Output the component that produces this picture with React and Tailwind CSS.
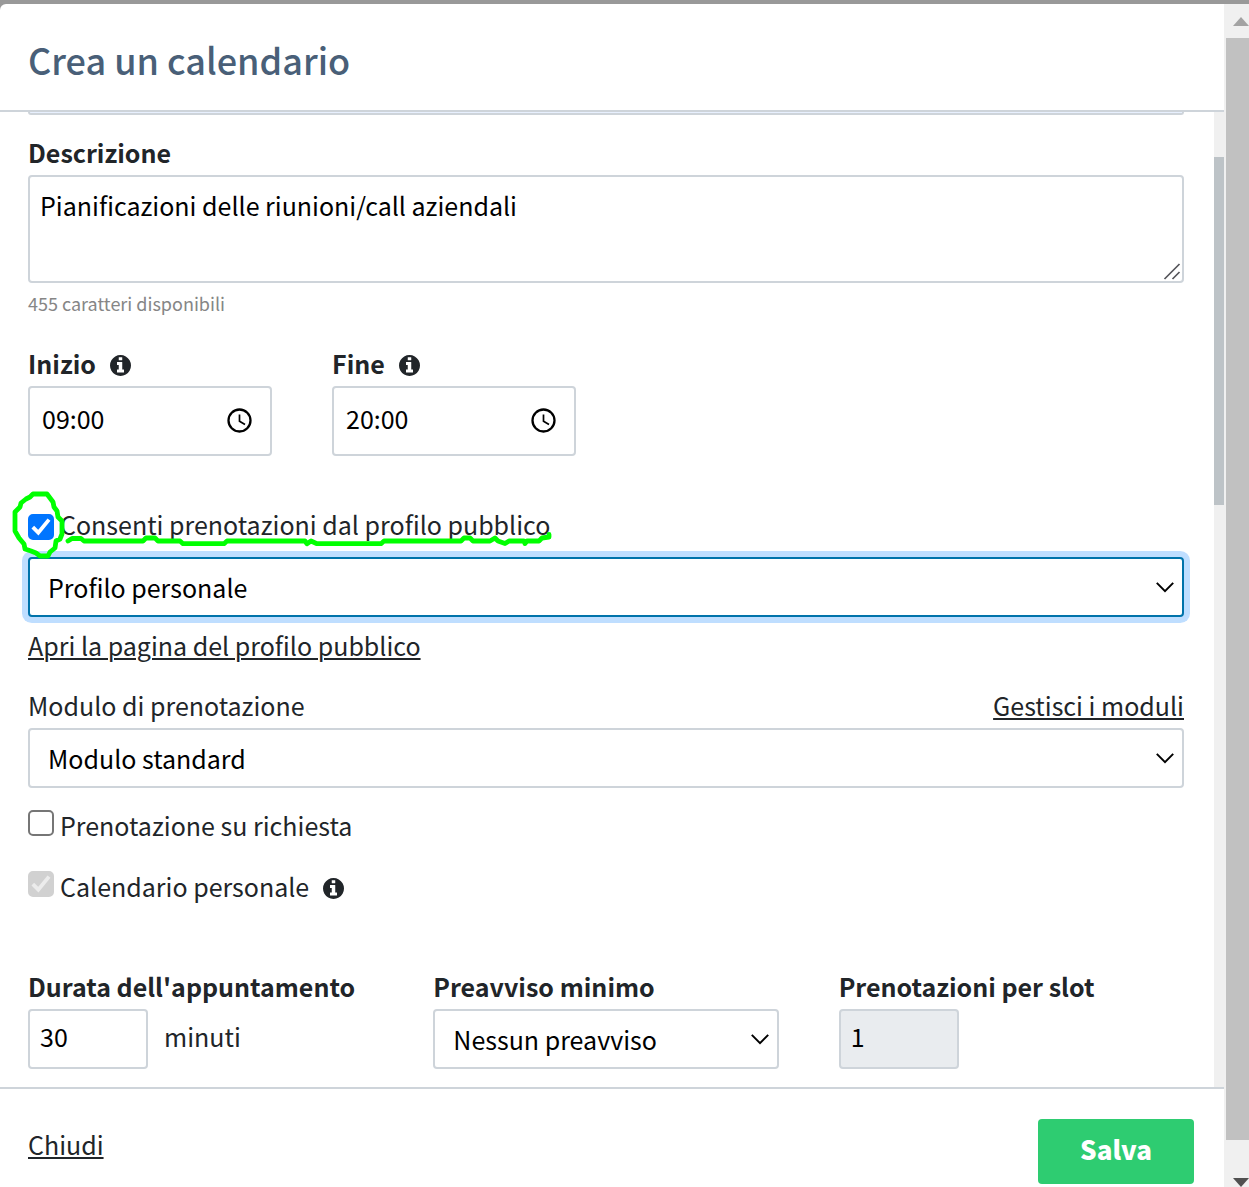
import React from 'react';

const fieldClass = 'block w-full rounded-[4px] border-2 border-[#ced4da] bg-white text-[25px] leading-[36px] text-black outline-none';

const InfoIcon = () => (
  <svg width="21" height="21" viewBox="0 0 1536 1536" fill="currentColor">
    <path d="M1024 1248v-160q0-14-9-23t-23-9h-96v-512q0-14-9-23t-23-9h-320q-14 0-23 9t-9 23v160q0 14 9 23t23 9h96v320h-96q-14 0-23 9t-9 23v160q0 14 9 23t23 9h448q14 0 23-9t9-23zM896 352v-160q0-14-9-23t-23-9h-192q-14 0-23 9t-9 23v160q0 14 9 23t23 9h192q14 0 23-9t9-23zM1536 768q0 209-103 385.5t-279.5 279.5-385.5 103-385.5-103-279.5-279.5-103-385.5 103-385.5 279.5-279.5 385.5-103 385.5 103 279.5 279.5 103 385.5z" />
  </svg>
);

const Label = ({ htmlFor, info, children }) => (
  <div className="flex h-[42px] gap-[14px]">
    <label htmlFor={htmlFor} className="font-bold">{children}</label>
    {info && <span className="self-center"><InfoIcon /></span>}
  </div>
);

const Select = ({ id, value, focused }) => (
  <div className="relative">
    <select
      id={id}
      className={
        focused
          ? 'block h-[60px] w-full appearance-none rounded-[4px] border-2 border-[#0073aa] bg-white pr-12 pl-[18px] text-[25px] text-black outline-none ring-6 ring-[#bfdeff]'
          : 'block h-[60px] w-full appearance-none rounded-[4px] border-2 border-[#ced4da] bg-white pr-12 pl-[18px] text-[25px] text-black outline-none'
      }
    >
      <option>{value}</option>
    </select>
    <svg className="pointer-events-none absolute top-[25px] right-[10px]" width="18" height="11" viewBox="0 0 18 11" fill="none" stroke="#000" strokeWidth="2">
      <path d="M0.8 0.9 L9 9.1 L17.2 0.9" />
    </svg>
  </div>
);

const TimeField = ({ id, label, value }) => (
  <div className="w-[244px]">
    <Label htmlFor={id} info>{label}</Label>
    <div className="relative">
      <input id={id} type="text" defaultValue={value} className={`${fieldClass} h-[70px] pr-14 pb-[6px] pl-3`} />
      <svg className="pointer-events-none absolute top-[21px] right-[19px]" width="26" height="27" viewBox="0 0 26 27" fill="none" stroke="#000">
        <circle cx="12.5" cy="13.5" r="11" strokeWidth="2.3" />
        <path d="M12.5 7.5 V14.2 L18 17.5" strokeWidth="1.7" />
      </svg>
    </div>
  </div>
);

const Check = ({ id, checked, disabled }) => (
  <span className="relative block size-[26px] shrink-0">
    <input
      id={id}
      type="checkbox"
      defaultChecked={checked}
      disabled={disabled}
      className="peer block size-[26px] appearance-none rounded-[5px] border-2 border-[#767676] bg-white checked:border-[#0075ff] checked:bg-[#0075ff] disabled:border-[#d1d1d1] disabled:bg-[#d1d1d1]"
    />
    <svg className="pointer-events-none absolute inset-0 hidden text-white peer-checked:block peer-disabled:text-[#ececec]" width="26" height="26" viewBox="0 0 26 26" fill="none" stroke="currentColor" strokeWidth="3.8">
      <path d="M4.8 13.2 L10.3 18.7 L21 5.6" />
    </svg>
  </span>
);

// Freehand marker around the checkbox and under its label
const Marker = () => (
  <svg
    className="pointer-events-none absolute -top-[17px] -left-[18px]"
    width="550"
    height="72"
    viewBox="10 488 550 72"
    fill="none"
    stroke="#00ff00"
    strokeWidth="4.8"
    strokeLinejoin="round"
    strokeLinecap="round"
  >
    <path d="M33 494 L47 494 L50 498 L53 502 L54 507 L57 511 L58 517 L62 521 L62 534 L60 539 L56 541 L55 548 L50 552 L48 556 L40 556 L36 553 L31 551 L25 549 L24 544 L19 538 L15 531 L15 512 L20 507 L21 503 L26 499 L30 497 Z" />
    <path d="M68 541 L72 538.5 L81 538.5 L84 541 L143 541 L146 538 L155 538 L158 541 L180 541 L183 543.7 L224 543.7 L227 541 L305 541 L307 543.7 L311 541 L317 543.7 L381 543.7 L384 541 L461 541 L464 538 L470 538 L473 541 L490 541 L495 538 L498 541 L505 543.5 L509 541 L524 541 L525 543.5 L527 541 L539 541 L542 538 L549 537 L549 534.5" />
  </svg>
);

const App = () => {
  return (
    <div className="flex min-h-screen flex-col bg-[#999999] pt-1 font-['Noto_Sans_CJK_SC','Noto_Sans',sans-serif] text-[25px] leading-[38px] text-[#212529]">
      <div className="flex flex-1">
        <div className="flex min-w-0 flex-1 flex-col rounded-tl-[6px] bg-white">
          {/* Header */}
          <header className="border-b-2 border-[#ced4da] px-7 pt-7 pb-6">
            <h1 className="text-[36px] leading-[54px] font-medium text-[#495f78]">Crea un calendario</h1>
          </header>

          {/* Scrollable body */}
          <div className="flex flex-1">
            <form id="calendar-form" className="min-w-0 flex-1 pr-[30px] pb-[18px] pl-7">
              <div className="h-[3px] rounded-b-[4px] border-2 border-t-0 border-[#ced4da] bg-[#e8f0fe]" />

              <div className="mt-[18px]">
                <Label htmlFor="description">Descrizione</Label>
                <div className="relative">
                  <textarea
                    id="description"
                    defaultValue="Pianificazioni delle riunioni/call aziendali"
                    className={`${fieldClass} h-[108px] resize-none px-[10px] py-[10px]`}
                  />
                  <svg className="pointer-events-none absolute right-[3px] bottom-[3px]" width="18" height="17" viewBox="0 0 18 17" fill="none" stroke="#55555a" strokeWidth="1.7">
                    <path d="M1.5 16 L16.5 1 M9.5 16 L16.5 9" />
                  </svg>
                </div>
                <p className="mt-[7px] text-[18px] leading-[27px] text-[#868686]">455 caratteri disponibili</p>
              </div>

              <div className="mt-[27px] flex gap-[60px]">
                <TimeField id="start" label="Inizio" value="09:00" />
                <TimeField id="end" label="Fine" value="20:00" />
              </div>

              {/* Public profile */}
              <div className="relative z-10 mt-[49px] flex h-[42px] items-start gap-[6px]">
                <div className="pt-[9px]"><Check id="public" checked /></div>
                <label htmlFor="public">Consenti prenotazioni dal profilo pubblico</label>
                <Marker />
              </div>
              <div className="mt-[10px]">
                <Select id="profile" value="Profilo personale" focused />
              </div>
              <div className="mt-[9px] h-[42px]">
                <a href="#profilo" className="underline decoration-2 underline-offset-2">Apri la pagina del profilo pubblico</a>
              </div>

              {/* Booking form */}
              <div className="mt-[18px] flex h-[42px] justify-between">
                <label htmlFor="module">Modulo di prenotazione</label>
                <a href="#moduli" className="underline decoration-2 underline-offset-2">Gestisci i moduli</a>
              </div>
              <Select id="module" value="Modulo standard" />

              <div className="mt-[18px] flex h-[42px] items-start gap-[6px]">
                <div className="pt-1"><Check id="request" /></div>
                <label htmlFor="request">Prenotazione su richiesta</label>
              </div>
              <div className="mt-[19px] flex h-[42px] items-start gap-[6px]">
                <div className="pt-1"><Check id="personal" checked disabled /></div>
                <label htmlFor="personal">Calendario personale</label>
                <span className="ml-2 self-center"><InfoIcon /></span>
              </div>

              <div className="mt-[58px] grid grid-cols-3 gap-[60px]">
                <div>
                  <Label htmlFor="duration">Durata dell'appuntamento</Label>
                  <div className="flex gap-4">
                    <div className="w-[120px]">
                      <input id="duration" type="text" defaultValue="30" className={`${fieldClass} h-[60px] px-[10px] pb-[6px]`} />
                    </div>
                    <span className="pt-2">minuti</span>
                  </div>
                </div>
                <div>
                  <Label htmlFor="notice">Preavviso minimo</Label>
                  <Select id="notice" value="Nessun preavviso" />
                </div>
                <div>
                  <Label htmlFor="slots">Prenotazioni per slot</Label>
                  <input
                    id="slots"
                    type="text"
                    defaultValue="1"
                    disabled
                    className="block h-[60px] w-[120px] rounded-[4px] border-2 border-[#ced4da] bg-[#e9ecef] px-[10px] pb-[6px] text-[25px] leading-[36px] text-black"
                  />
                </div>
              </div>
            </form>
            <div className="w-[10px] bg-[#f0f0f0] pt-[45px]">
              <div className="h-[348px] bg-[#bdc3c7]" />
            </div>
          </div>

          {/* Footer */}
          <footer className="flex items-start justify-between border-t-2 border-[#ced4da] pt-[30px] pr-[30px] pb-[3px] pl-7">
            <a href="#chiudi" className="mt-[6px] underline decoration-2 underline-offset-2">Chiudi</a>
            <button type="submit" form="calendar-form" className="h-[65px] w-[156px] rounded-[4px] bg-[#2ecc71] pb-[6px] text-[26px] font-black text-white">
              Salva
            </button>
          </footer>
        </div>

        {/* Page scrollbar */}
        <div className="flex w-[25px] flex-col bg-[#f0f0f0] pl-[2px]">
          <div className="flex h-[34px] justify-end pt-[13px]">
            <svg width="16" height="9" viewBox="0 0 16 9" fill="#a3a3a3"><path d="M0 9 L8 0 L16 9 Z" /></svg>
          </div>
          <div className="flex-1 bg-[#c1c1c1]" />
          <div className="flex h-[47px] items-end justify-end">
            <svg width="16" height="9" viewBox="0 0 16 9" fill="#505050"><path d="M0 0 H16 L8 9 Z" /></svg>
          </div>
        </div>
      </div>
    </div>
  );
};

export default App;
